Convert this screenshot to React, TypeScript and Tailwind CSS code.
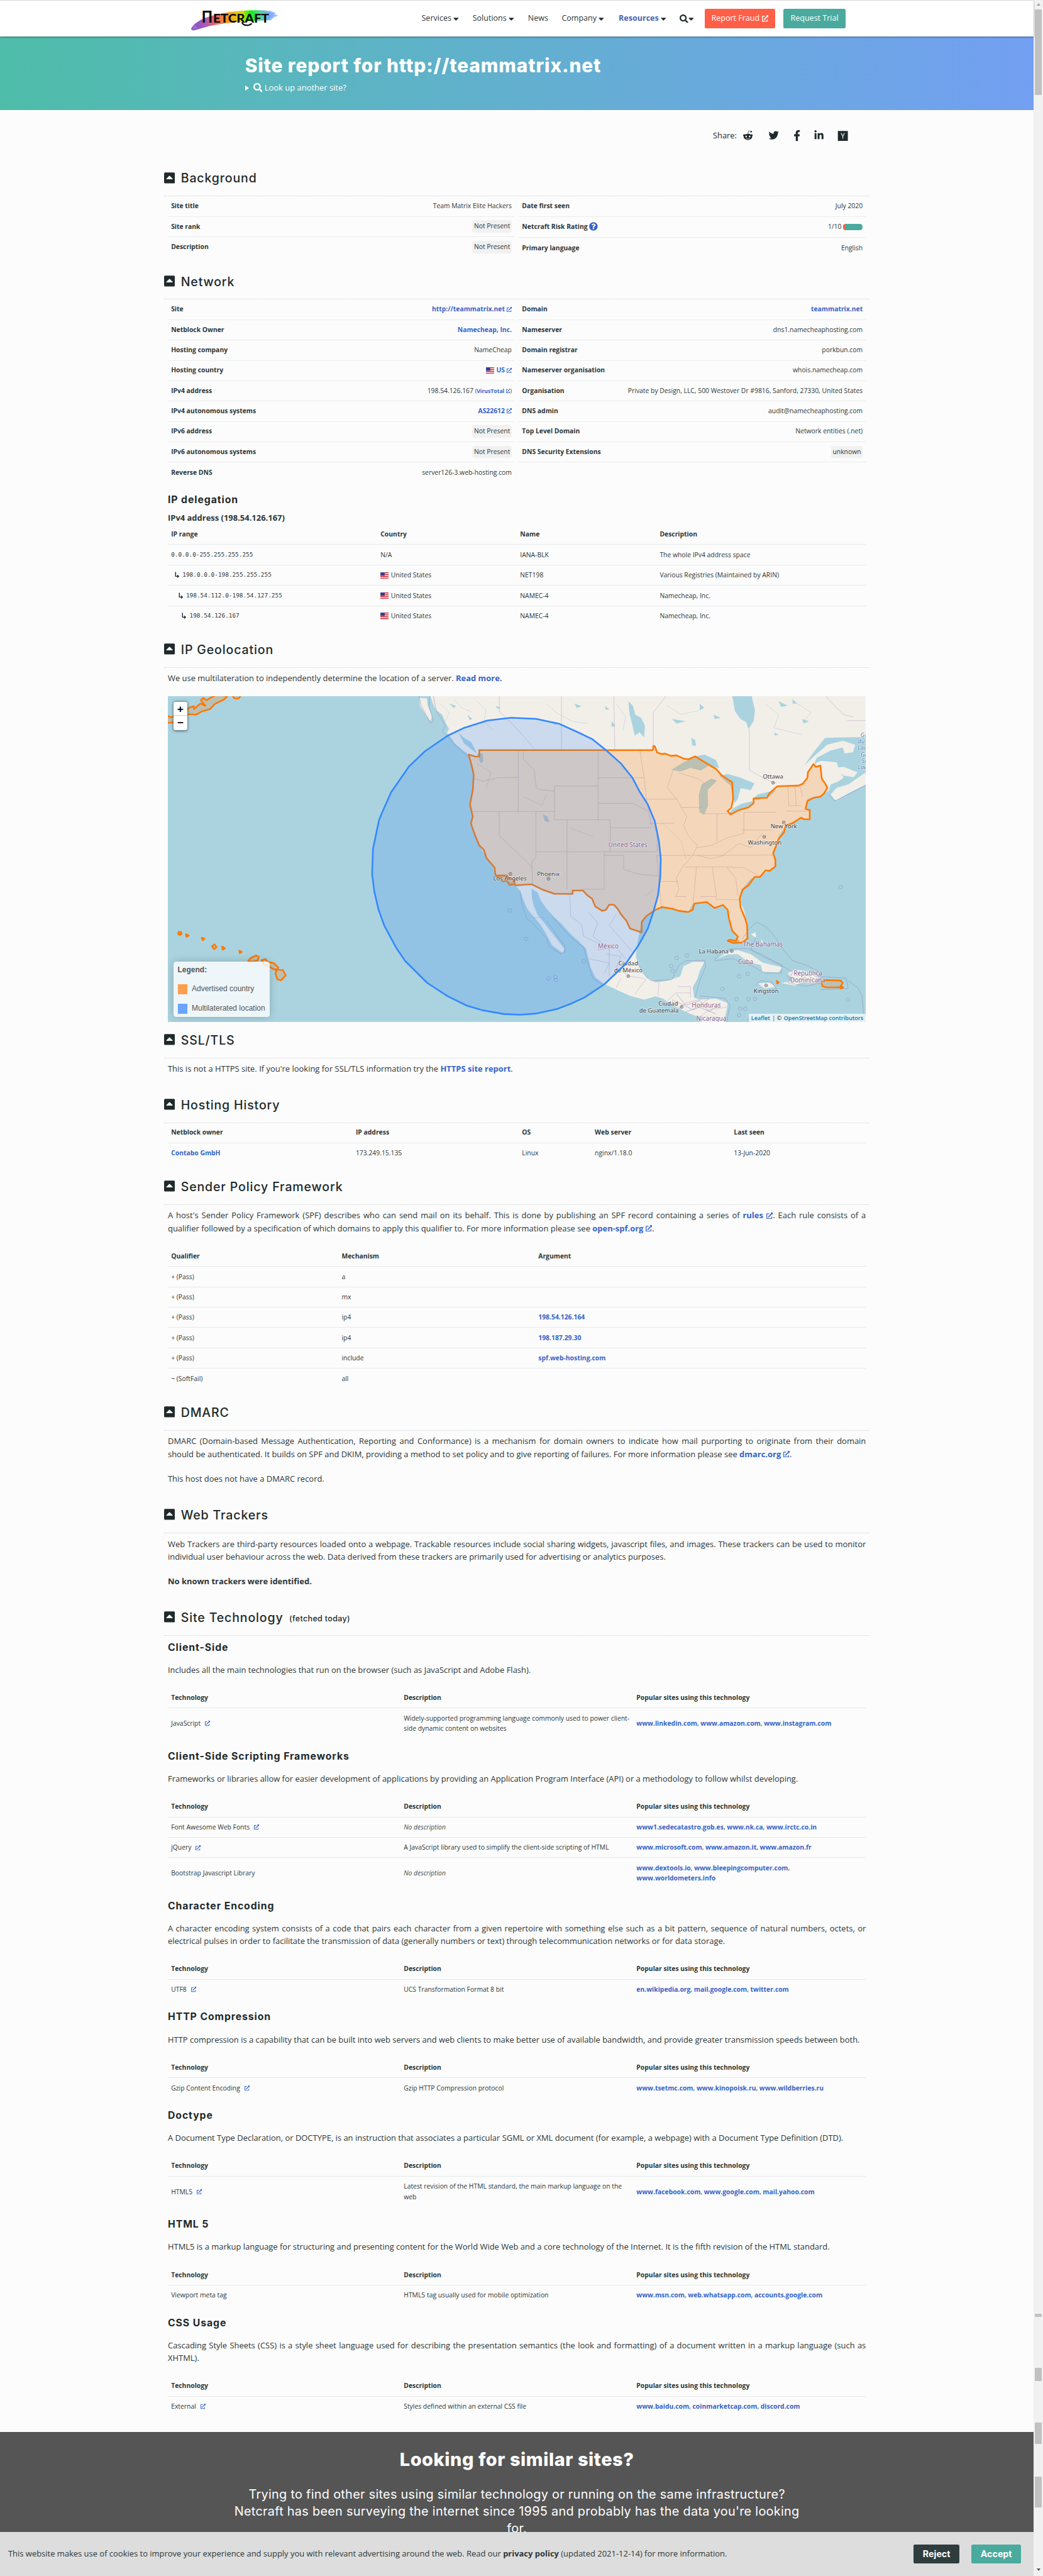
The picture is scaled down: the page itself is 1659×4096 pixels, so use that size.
import React from "react";
import {
  FaCaretDown,
  FaCaretSquareUp,
  FaExternalLinkAlt,
  FaFacebookF,
  FaHackerNews,
  FaLinkedinIn,
  FaQuestionCircle,
  FaRedditAlien,
  FaSearch,
  FaTwitter,
} from "react-icons/fa";

const Ext = () => <FaExternalLinkAlt className="inline h-[0.8em] w-[0.8em] align-[-0.05em] text-[#3a66cc]" />;

const Link = ({ children, ext }: { children: React.ReactNode; ext?: boolean }) => (
  <span className="font-bold text-[#3563c9]">
    {children}
    {ext && (
      <>
        {" "}
        <Ext />
      </>
    )}
  </span>
);

const Badge = ({ children }: { children: React.ReactNode }) => (
  <span className="inline-block h-[23px] rounded bg-[#f1f1f1] px-[3px] leading-[23px]">{children}</span>
);

const Flag = () => (
  <svg viewBox="0 0 15 12" className="mr-[4px] inline h-3 w-[15px] align-[-2px]">
    <rect width="15" height="12" fill="#fff" />
    {[0, 3.4, 6.8, 10.2].map((y) => (
      <rect key={y} y={y} width="15" height="1.8" fill="#d8202c" />
    ))}
    <rect width="8" height="6.4" fill="#3c3b8e" />
    <rect width="15" height="12" fill="none" stroke="#999" strokeOpacity=".4" />
  </svg>
);

const SectionTitle = ({ title, note }: { title: string; note?: string }) => (
  <div className="-mx-[7px] flex h-[45px] items-start border-b-2 border-dotted border-[#cfd0d0]">
    <FaCaretSquareUp className="-mt-[1px] h-[23px] w-5 text-[#20292b]" />
    <h2 className="ml-[11px] font-['Inter'] text-[22.6px] font-medium leading-[25px] tracking-[1px] text-[#20292b]">{title}</h2>
    {note && (
      <span className="ml-[11px] mt-[4px] font-['Inter'] text-[14.5px] font-medium leading-[20px] tracking-[0.4px] text-[#20292b]">{note}</span>
    )}
  </div>
);

const Section = ({ title, note, height, children }: { title: string; note?: string; height: string; children: React.ReactNode }) => (
  <section className={height}>
    <SectionTitle title={title} note={note} />
    {children}
  </section>
);

const Para = ({ children, className = "" }: { children: React.ReactNode; className?: string }) => (
  <p className={`text-justify text-[15px] leading-[23.2px] ${className}`}>{children}</p>
);

type Pair = [string, React.ReactNode];

const PairTable = ({ rows }: { rows: Pair[] }) => (
  <div className="flex-1">
    {rows.map(([k, v], i) => (
      <div
        key={k}
        className={`flex items-center justify-between border-[#ebecec] px-[6px] ${
          k === "Netcraft Risk Rating" ? "h-[38.8px]" : "h-[37.45px]"
        } ${i === rows.length - 1 && k !== "DNS Security Extensions" ? "" : "border-b"}`}
      >
        <span className="flex items-center font-bold">
          {k}
          {k === "Netcraft Risk Rating" && <FaQuestionCircle className="ml-[3px] mb-[3px] h-4 w-4 text-[#3563c9]" />}
        </span>
        <span>{v}</span>
      </div>
    ))}
  </div>
);

const GridTable = ({ cols, head, rows }: { cols: string; head: string[]; rows: React.ReactNode[][] }) => (
  <div>
    <div className={`grid h-[37.4px] items-center border-b border-[#e8e9e9] font-bold ${cols}`}>
      {head.map((h) => (
        <span key={h} className="px-[6px]">
          {h}
        </span>
      ))}
    </div>
    {rows.map((r, i) => (
      <div key={i} className={`grid items-center py-[8.6px] leading-[19.2px] ${cols} ${i < rows.length - 1 ? "border-b border-[#e8e9e9]" : ""}`}>
        {r.map((c, j) => (
          <span key={j} className="px-[6px]">
            {c}
          </span>
        ))}
      </div>
    ))}
  </div>
);

const notPresent = <Badge>Not Present</Badge>;

const background: [Pair[], Pair[]] = [
  [
    ["Site title", "Team Matrix Elite Hackers"],
    ["Site rank", notPresent],
    ["Description", notPresent],
  ],
  [
    ["Date first seen", "July 2020"],
    [
      "Netcraft Risk Rating",
      <span className="flex items-center gap-[3px]">
        1/10
        <span className="flex h-3 w-9 overflow-hidden rounded-[5px] bg-[#4aaa9d]">
          <span className="w-1 bg-[#ff5d47]" />
        </span>
      </span>,
    ],
    ["Primary language", "English"],
  ],
];

const network: [Pair[], Pair[]] = [
  [
    ["Site", <Link ext>http://teammatrix.net</Link>],
    ["Netblock Owner", <Link>Namecheap, Inc.</Link>],
    ["Hosting company", "NameCheap"],
    [
      "Hosting country",
      <>
        <Flag />
        <Link ext>US</Link>
      </>,
    ],
    [
      "IPv4 address",
      <>
        198.54.126.167{" "}
        <span className="text-[10px]">
          (<Link ext>VirusTotal</Link>)
        </span>
      </>,
    ],
    ["IPv4 autonomous systems", <Link ext>AS22612</Link>],
    ["IPv6 address", notPresent],
    ["IPv6 autonomous systems", notPresent],
    ["Reverse DNS", "server126-3.web-hosting.com"],
  ],
  [
    ["Domain", <Link>teammatrix.net</Link>],
    ["Nameserver", "dns1.namecheaphosting.com"],
    ["Domain registrar", "porkbun.com"],
    ["Nameserver organisation", "whois.namecheap.com"],
    ["Organisation", "Private by Design, LLC, 500 Westover Dr #9816, Sanford, 27330, United States"],
    ["DNS admin", "audit@namecheaphosting.com"],
    ["Top Level Domain", "Network entities (.net)"],
    ["DNS Security Extensions", <Badge>unknown</Badge>],
  ],
];

const Range = ({ depth, children }: { depth: number; children: string }) => (
  <span className="flex h-[19.2px] items-center font-['DejaVu_Sans_Mono',monospace] text-[10.9px]">
    {depth > 0 && (
      <svg viewBox="0 0 8 12" className={`mr-[6px] h-[12px] w-2 ${depth === 1 ? "ml-[7px]" : depth === 2 ? "ml-[13.5px]" : "ml-[20px]"}`}>
        <path d="M1.5 0.5V8.5H7M4.6 6L7.2 8.5L4.6 11" fill="none" stroke="#20292b" strokeWidth="1.6" />
      </svg>
    )}
    {children}
  </span>
);

const us = (
  <>
    <Flag />
    United States
  </>
);

const Sites = ({ names }: { names: string[] }) => (
  <>
    {names.map((n, i) => (
      <React.Fragment key={n}>
        <Link>{n}</Link>
        {i < names.length - 1 && ", "}
      </React.Fragment>
    ))}
  </>
);

type Tech = { title: string; text: string; rows: [string, boolean, string, string[]][] };

const technologies: Tech[] = [
  {
    title: "Client-Side",
    text: "Includes all the main technologies that run on the browser (such as JavaScript and Adobe Flash).",
    rows: [
      [
        "JavaScript",
        true,
        "Widely-supported programming language commonly used to power client-side dynamic content on websites",
        ["www.linkedin.com", "www.amazon.com", "www.instagram.com"],
      ],
    ],
  },
  {
    title: "Client-Side Scripting Frameworks",
    text: "Frameworks or libraries allow for easier development of applications by providing an Application Program Interface (API) or a methodology to follow whilst developing.",
    rows: [
      ["Font Awesome Web Fonts", true, "", ["www1.sedecatastro.gob.es", "www.nk.ca", "www.irctc.co.in"]],
      ["jQuery", true, "A JavaScript library used to simplify the client-side scripting of HTML", ["www.microsoft.com", "www.amazon.it", "www.amazon.fr"]],
      ["Bootstrap Javascript Library", false, "", ["www.dextools.io", "www.bleepingcomputer.com", "www.worldometers.info"]],
    ],
  },
  {
    title: "Character Encoding",
    text: "A character encoding system consists of a code that pairs each character from a given repertoire with something else such as a bit pattern, sequence of natural numbers, octets, or electrical pulses in order to facilitate the transmission of data (generally numbers or text) through telecommunication networks or for data storage.",
    rows: [["UTF8", true, "UCS Transformation Format 8 bit", ["en.wikipedia.org", "mail.google.com", "twitter.com"]]],
  },
  {
    title: "HTTP Compression",
    text: "HTTP compression is a capability that can be built into web servers and web clients to make better use of available bandwidth, and provide greater transmission speeds between both.",
    rows: [["Gzip Content Encoding", true, "Gzip HTTP Compression protocol", ["www.tsetmc.com", "www.kinopoisk.ru", "www.wildberries.ru"]]],
  },
  {
    title: "Doctype",
    text: "A Document Type Declaration, or DOCTYPE, is an instruction that associates a particular SGML or XML document (for example, a webpage) with a Document Type Definition (DTD).",
    rows: [
      ["HTML5", true, "Latest revision of the HTML standard, the main markup language on the web", ["www.facebook.com", "www.google.com", "mail.yahoo.com"]],
    ],
  },
  {
    title: "HTML 5",
    text: "HTML5 is a markup language for structuring and presenting content for the World Wide Web and a core technology of the Internet. It is the fifth revision of the HTML standard.",
    rows: [["Viewport meta tag", false, "HTML5 tag usually used for mobile optimization", ["www.msn.com", "web.whatsapp.com", "accounts.google.com"]]],
  },
  {
    title: "CSS Usage",
    text: "Cascading Style Sheets (CSS) is a style sheet language used for describing the presentation semantics (the look and formatting) of a document written in a markup language (such as XHTML).",
    rows: [["External", true, "Styles defined within an external CSS file", ["www.baidu.com", "coinmarketcap.com", "discord.com"]]],
  },
];

const H3 = ({ children, className = "" }: { children: string; className?: string }) => (
  <h3 className={`h-[26px] font-['Inter'] text-[18.3px] font-bold leading-[26px] tracking-[1.05px] text-[#20292b] ${className}`}>{children}</h3>
);

const US =
  "M682,290L698,300 705,298 705,270 1079,270 1080,252 1083,252 1088,280 1097,288 1105,286 1118,296 1130,294 1145,308 1155,312 1170,298 1195,330 1215,355 1228,385 1250,415 1252,490 1248,530 1240,545 1246,560 1265,540 1285,528 1296,510 1296,488 1325,485 1330,465 1347,433 1393,430 1402,422 1412,395 1413,370 1425,333 1430,345 1440,340 1443,400 1450,420 1455,440 1448,465 1440,480 1425,485 1412,500 1408,535 1417,540 1417,582 1405,582 1398,575 1380,600 1365,610 1362,640 1350,670 1345,700 1338,735 1343,765 1343,795 1330,815 1322,812 1310,842 1298,842 1285,880 1272,900 1266,940 1268,980 1278,1030 1282,1060 1283,1120 1270,1138 1252,1140 1240,1130 1245,1125 1258,1130 1262,1110 1250,1085 1243,1030 1240,990 1230,968 1212,982 1195,955 1168,962 1165,990 1155,1000 1135,995 1120,985 1098,978 1085,990 1065,1018 1055,1045 1055,1092 1030,1075 1022,1040 1010,1010 1003,985 995,967 985,967 978,990 970,995 955,975 948,940 938,925 928,903 906,903 906,918 867,918 840,898 818,875 783,880 775,850 760,838 740,835 738,800 720,755 715,720 705,700 697,660 690,620 687,600 691,570 685,515 691,450 693,380 688,335Z";

const CONTINENT =
  "M600,27L605,60 612,90 625,110 632,145 640,175 635,192 650,225 665,262 682,290 690,340 693,390 690,450 685,515 691,570 687,605 695,650 705,700 715,735 735,800 740,835 760,845 775,860 783,880 793,905 800,945 808,985 820,1015 838,1060 852,1110 862,1150 875,1170 885,1185 888,1165 875,1130 860,1090 845,1050 830,1010 822,970 818,930 818,895 830,912 838,950 850,985 865,1020 885,1060 900,1095 918,1130 935,1165 940,1210 945,1250 955,1295 975,1325 1000,1350 1030,1378 1060,1395 1085,1380 1100,1390 1115,1410 1135,1435 1160,1460 1180,1475 1185,1497 1232,1497 1238,1440 1240,1410 1215,1390 1180,1395 1168,1385 1165,1340 1175,1300 1180,1265 1190,1225 1165,1225 1145,1245 1138,1290 1110,1310 1085,1318 1065,1295 1050,1250 1042,1200 1045,1150 1050,1095 1055,1040 1075,1005 1090,980 1110,978 1130,990 1155,1000 1165,965 1195,955 1212,980 1230,968 1240,1000 1245,1060 1258,1100 1268,1140 1280,1130 1282,1050 1275,990 1265,940 1270,900 1290,850 1310,840 1330,810 1343,790 1338,730 1350,660 1365,610 1395,580 1417,580 1415,540 1408,530 1412,490 1440,475 1458,452 1462,425 1478,412 1490,395 1480,360 1475,325 1440,318 1426,333 1432,305 1462,272 1488,258 1492,285 1510,280 1515,245 1488,228 1455,245 1425,300 1405,340 1425,280 1450,215 1500,212 1538,212 1538,27Z";

const CIRCLE =
  "M773,124L827,129 878,152 918,190 948,220 978,270 1010,330 1035,395 1050,455 1068,515 1083,590 1092,680 1096,760 1095,840 1090,925 1080,1000 1068,1075 1048,1150 1020,1235 975,1325 932,1385 903,1413 873,1437 827,1458 793,1463 758,1460 712,1443 678,1422 637,1380 593,1320 545,1220 527,1165 500,1060 488,990 479,910 474,830 476,715 489,585 497,545 515,460 553,345 588,275 637,205 672,170 722,137Z";

const LAKES = [
  "M1250,27L1256,95 1268,130 1280,145 1285,175 1296,140 1299,90 1292,27Z",
  "M1026,50L1036,70 1041,110 1054,125 1062,160 1060,212 1050,190 1040,205 1034,150 1029,110Z",
  "M1118,360L1145,325 1172,298 1190,290 1215,315 1222,352 1200,340 1182,362 1160,350 1140,366Z",
  "M1178,470L1184,425 1205,398 1217,408 1197,450 1198,520 1190,560 1179,550Z",
  "M1222,385L1240,378 1265,392 1298,420 1290,450 1268,442 1262,490 1255,510 1246,430Z",
  "M1243,558L1250,535 1270,512 1294,500 1296,515 1268,540Z",
  "M1294,490L1305,470 1335,455 1345,450 1330,480 1300,495Z",
  "M1162,215L1170,225 1172,250 1164,250Z",
  "M842,560L852,570 856,595 846,590Z",
  "M660,190L672,215 688,235 700,285 690,270 672,240Z",
  "M700,285L712,285 714,320 708,330Z",
];

const STATES =
  "M692,395L712,411 745,395 790,393M789,270V547M800,270V310L823,360 828,440 840,450 867,455M867,432H961M867,432V584H987V728M691,547H867M748,547V655L820,800M827,547V728H1087M894,584V897M961,270V584M961,395H1035L1060,395M1051,270L1060,395 1065,491 1075,600 1088,640V728M961,510H1035L1068,545M987,620H1077M827,728V755L818,775 820,875M974,728V897H928M974,745H1016V808L1050,830 1094,838M1087,745L1098,990M1063,491H1131M1072,600H1125M1087,745H1157M1131,491L1140,528 1152,570 1145,610 1155,655 1175,700 1165,745 1143,797 1130,845 1135,900 1128,930H1152M1140,528H1185M1185,557H1245M1217,557V680M1175,710L1205,700 1240,665 1275,645V550H1345M1155,745L1337,743M1147,797H1240L1275,800 1310,840M1173,797L1166,955M1207,797L1216,930M1180,930H1215V943L1263,945M1238,797L1258,850 1262,930M1273,630H1337M1175,745L1205,760 1230,745 1265,690 1290,710 1315,645M1370,433L1372,520H1398M1385,433L1388,520M1366,545H1412M1395,425L1402,480M1122,365L1110,440 1131,491M1134,372L1175,398 1190,420M1098,862H1133";

const PROVINCES =
  "M748,27V95L778,155 810,230 825,268M882,27V268M995,27L997,268M1107,27L1080,100V252M1287,175V360L1320,400 1345,420M1452,27L1470,70 1490,110 1510,120M1498,137H1538M940,1000L960,1050 950,1110 975,1150M900,918L902,1020 925,1055M1000,1010L985,1060 1010,1120 1035,1180M925,1055L930,1110 960,1140M820,1025H845M980,1190L1010,1200 1000,1250 1030,1290 1060,1300M940,1210L985,1230 975,1275M1000,1340L1010,1300M1092,1320L1090,1375M1132,1336H1160V1386M1110,1400L1128,1365H1160M1120,1400L1140,1440M1180,1395L1150,1410 1135,1435M1237,1430L1200,1440 1180,1475M960,1170L1000,1160 1020,1210M985,1150V1290M1065,1300L1040,1370";

const MARITIME =
  "M575,27L580,70 590,110 600,148 606,140 602,110 597,70 598,27M606,27L612,90 632,160 625,185 640,215 660,262 680,297M793,905L797,970 805,1010 806,1028 820,1050 850,1120 855,1155 880,1188 890,1180 888,1150 870,1100 850,1040M862,1020L900,1110 930,1160 940,1240 950,1300 972,1330M1272,1120L1285,1080 1302,1045 1325,1070 1345,1120 1360,1170 1380,1220 1410,1240 1438,1270 1435,1310M1302,1110L1290,1170 1318,1195 1345,1230 1380,1270 1370,1320 1410,1335 1440,1320M1538,428L1500,470 1470,500 1458,470M1212,1215L1225,1180 1250,1165 1285,1165 1320,1205 1358,1240 1355,1275 1320,1275 1290,1240 1250,1210 1212,1220M1300,1330L1310,1310 1335,1315 1345,1345 1320,1370 1302,1345M1045,1220L1055,1270 1075,1310 1120,1305 1135,1240 1150,1220 1190,1218 1193,1245 1180,1310 1170,1385M1180,1378L1235,1390 1245,1420 1238,1497M1500,1310L1520,1340 1530,1380 1532,1440 1536,1490M1428,1290L1495,1298 1500,1345 1440,1350";

const dots: [number, number][] = [
  [771, 993], [806, 1121], [854, 1300], [869, 1292], [870, 1306], [930, 1222], [1130, 1207], [1152, 1196], [1118, 1243],
  [1121, 1265], [1265, 1290], [1283, 1279], [1229, 1347], [1259, 1392], [1285, 1392], [1299, 1392], [1267, 1436], [1278, 1436],
  [1265, 1465], [1499, 1396], [1484, 887], [1288, 1488], [1370, 1490],
];

type Label = [string, number, number, "city" | "country" | "sea"];
const labels: Label[] = [
  ["Ottawa", 1338, 399, "city"],
  ["New York", 1361, 623, "city"],
  ["Washington", 1320, 696, "city"],
  ["United States", 1025, 707, "country"],
  ["Phoenix", 854, 839, "city"],
  ["Los Angeles", 771, 859, "city"],
  ["México", 983, 1165, "country"],
  ["Ciudad", 1026, 1240, "city"],
  ["de México", 1026, 1273, "city"],
  ["La Habana", 1210, 1187, "city"],
  ["The Bahamas", 1316, 1156, "country"],
  ["Cuba", 1279, 1234, "country"],
  ["República", 1413, 1285, "country"],
  ["Dominicana", 1413, 1318, "country"],
  ["Kingston", 1323, 1366, "city"],
  ["Ciudad", 1112, 1421, "city"],
  ["de Guatemala", 1092, 1454, "city"],
  ["Honduras", 1194, 1431, "country"],
  ["Nicaragua", 1205, 1489, "country"],
  ["Golfe", 1541, 211, "sea"],
  ["du Saint-", 1546, 240, "sea"],
  ["Laurent", 1542, 269, "sea"],
  ["Gulf of", 1546, 298, "sea"],
  ["Saint", 1543, 328, "sea"],
  ["Lawrence", 1547, 357, "sea"],
];

const markers: [number, number][] = [
  [1338, 417], [1361, 596], [1319, 661], [772, 828], [854, 850], [1026, 1289], [1249, 1176], [1323, 1331], [1141, 1428],
];

const GeoMap = () => (
  <div className="relative mt-[22px] h-[600px] w-[1285px] overflow-hidden bg-[#aad3df] font-['Liberation_Sans',sans-serif]">
    <svg viewBox="34 27 1504 1470" preserveAspectRatio="none" className="absolute inset-0 h-full w-full">
      <g fill="#f2efe9">
        <path d={CONTINENT} />
        <path d="M576,35L592,37 594,70 603,115 600,140 588,105 577,70Z" />
        <path d="M636,188L652,205 672,240 690,275 694,292 672,275 652,240Z" />
        <path d="M1462,470L1475,440 1500,425 1538,370 1538,425 1500,465 1473,498Z" />
        <path d="M1470,350L1490,345 1520,370 1512,392 1490,385Z" />
        <path d="M1218,1210L1240,1180 1262,1172 1290,1190 1315,1228 1358,1250 1350,1272 1315,1270 1312,1240 1285,1225 1262,1190 1240,1192Z" />
        <path d="M1370,1275L1385,1260 1420,1270 1440,1295 1430,1320 1400,1318 1385,1332 1355,1320 1380,1310Z" />
        <path d="M1305,1322L1330,1318 1343,1338 1320,1345Z" />
        <path d="M1290,1100L1300,1092 1303,1120ZM1312,1120L1320,1150 1314,1150Z" />
      </g>
      <g fill="#aad3df">
        {LAKES.map((d) => (
          <path key={d} d={d} />
        ))}
        <path d="M640,60L655,70 650,80ZM680,110L690,130 684,135ZM860,140L880,150 868,155ZM910,60L925,72 915,80ZM990,140L998,160 990,165ZM1120,130L1150,140 1130,150ZM1180,60L1190,80 1180,90ZM1210,110L1225,125 1212,130ZM1350,50L1370,70 1355,75ZM1400,130L1415,140 1405,150ZM1380,40L1390,60 1380,60ZM740,70L752,80 744,84ZM1340,190L1350,200 1342,205ZM975,70L985,85 978,90Z" />
      </g>
      <g fill="none" stroke="#9db9cf" strokeOpacity=".45">
        <path
          vectorEffect="non-scaling-stroke"
          d="M620,60L640,100 632,140M650,40L668,80 690,100M700,50L720,90 715,140 735,180M850,60L870,100 905,140 940,150M1000,60L1020,120 1015,180M1110,70L1140,110 1180,90M1320,60L1350,110 1340,170 1400,200M1390,60L1420,100 1400,150M700,330L730,370 720,440M800,480L840,520 850,470M900,620L950,660M1100,600L1140,680 1150,760M1060,930L1080,900"
        />
      </g>
      <g fill="none" stroke="#9b7db0" strokeOpacity=".4">
        <path vectorEffect="non-scaling-stroke" d={STATES} />
        <path vectorEffect="non-scaling-stroke" d={PROVINCES} />
      </g>
      <g fill="none" stroke="#8f86b8" strokeOpacity=".6">
        <path vectorEffect="non-scaling-stroke" d={MARITIME} />
        {dots.map(([x, y]) => (
          <ellipse key={`${x}-${y}`} cx={x} cy={y} rx="4" ry="8" vectorEffect="non-scaling-stroke" />
        ))}
        <path
          vectorEffect="non-scaling-stroke"
          d="M1130,1370L1150,1420 1180,1400 1200,1450 1225,1410M1120,1395L1165,1440 1200,1390M1150,1450L1180,1430 1215,1460M1370,1290L1395,1320 1410,1280 1430,1310"
        />
      </g>
      <g fill="#ff7800" fillOpacity=".2" stroke="#ff7800" strokeWidth="3" strokeLinejoin="round">
        <path vectorEffect="non-scaling-stroke" d={US} />
        <path vectorEffect="non-scaling-stroke" d="M740,835L765,835 768,850 782,855 780,875 770,878 765,860 755,862 748,845Z" />
        <path
          vectorEffect="non-scaling-stroke"
          d="M162,27L155,42 135,62 125,85 108,95 95,110 72,108 78,80 90,72 90,85 104,60 115,70 105,45 110,35 117,45 125,35 140,20Z"
        />
        <path vectorEffect="non-scaling-stroke" d="M30,112L40,122 50,118 60,125 55,145 30,147" />
        <path vectorEffect="non-scaling-stroke" d="M174,27C176,42 188,42 190,27" />
        <path
          vectorEffect="non-scaling-stroke"
          d="M57,1090L62,1090 64,1098 60,1104 56,1100ZM73,1100L79,1106 74,1112ZM107,1116L113,1120 109,1127ZM129,1155L134,1146 139,1158 134,1168ZM151,1156L157,1164 152,1170ZM188,1174L193,1180 189,1186Z"
        />
        <path
          vectorEffect="non-scaling-stroke"
          d="M207,1222L212,1208 224,1196 230,1202 227,1220 215,1224ZM236,1218L244,1212 250,1226 262,1230 272,1250 270,1262 262,1258 252,1246 240,1236ZM268,1258L282,1262 288,1286 278,1308 270,1304 266,1280Z"
        />
        <path
          vectorEffect="non-scaling-stroke"
          d="M1442,1318L1450,1307 1484,1309 1488,1320 1482,1340 1452,1340 1444,1334ZM1484,1333L1489,1340 1484,1345ZM1346,1311L1350,1318 1347,1323Z"
        />
      </g>
      <path d={CIRCLE} fill="#3388ff" fillOpacity=".2" stroke="none" />
    </svg>
    <svg viewBox="0 0 1285 600" className="absolute inset-0 h-full w-full font-['Noto_Sans',sans-serif]">
      {markers.map(([x, y]) => (
        <g key={x} fill="none" stroke="#555">
          <circle cx={(x - 34) * 0.8544} cy={(y - 27) * 0.4082} r="2.6" fill="#fff" fillOpacity=".5" />
          <circle cx={(x - 34) * 0.8544} cy={(y - 27) * 0.4082} r=".7" />
        </g>
      ))}
      {labels.map(([t, x, y, kind]) => (
        <text
          key={t + y}
          x={(x - 34) * 0.8544}
          y={(y - 27) * 0.4082}
          textAnchor="middle"
          fontSize={kind === "country" ? 11.5 : 11}
          fontStyle={kind === "sea" ? "italic" : "normal"}
          fill={kind === "country" ? "#85628f" : kind === "sea" ? "#5d88b8" : "#3c3a3c"}
          stroke="#fff"
          strokeOpacity=".5"
          strokeWidth="2"
          paintOrder="stroke"
        >
          {t}
        </text>
      ))}
    </svg>
    <svg viewBox="34 27 1504 1470" preserveAspectRatio="none" className="absolute inset-0 h-full w-full">
      <path vectorEffect="non-scaling-stroke" d={CIRCLE} fill="none" stroke="#3388ff" strokeWidth="3" strokeLinejoin="round" />
    </svg>
    <div className="absolute left-[10px] top-[10px] w-[26px] rounded bg-white text-center text-[20px] font-bold leading-[26px] text-black shadow-[0_1px_5px_rgba(0,0,0,0.65)]">
      <div className="h-[26px] border-b border-[#ccc]">+</div>
      <div className="h-[26px]">−</div>
    </div>
    <div className="absolute bottom-[10px] left-[10px] flex h-[102px] w-[178px] flex-col justify-between rounded-[5px] bg-white/80 px-2 pb-[5px] pt-[6px] text-[13.9px] leading-[20px] text-[#555] shadow-[0_0_15px_rgba(0,0,0,0.2)]">
      <div className="font-bold">Legend:</div>
      <div className="flex items-center gap-2">
        <span className="h-[18px] w-[18px] bg-[#fb9f4e]" />
        Advertised country
      </div>
      <div className="flex items-center gap-2">
        <span className="h-[18px] w-[18px] bg-[#6aa5fb]" />
        Multilaterated location
      </div>
    </div>
    <div className="absolute bottom-0 right-0 flex h-4 w-[216px] items-center justify-center gap-1 whitespace-nowrap bg-white/70 font-['Open_Sans'] text-[10.5px] leading-4 text-[#333]">
      <span className="font-semibold text-[#0078a8]">Leaflet</span>
      <span>| ©</span>
      <span className="font-semibold text-[#0078a8]">OpenStreetMap contributors</span>
    </div>
  </div>
);

const Logo = () => (
  <svg viewBox="0 0 170 44" className="h-11 w-[170px]">
    <defs>
      <linearGradient id="brush" x1="0" x2="1">
        <stop offset="0" stopColor="#8a4fc4" />
        <stop offset=".15" stopColor="#a05cc0" />
        <stop offset=".3" stopColor="#f2655a" />
        <stop offset=".45" stopColor="#f0a818" />
        <stop offset=".58" stopColor="#d8dc10" />
        <stop offset=".68" stopColor="#10f010" />
        <stop offset=".78" stopColor="#50d890" />
        <stop offset=".9" stopColor="#78a8ff" />
        <stop offset="1" stopColor="#a8c8ff" />
      </linearGradient>
    </defs>
    <path d="M4 40C2 35 10 27 26 19C60 6 110 1 150 5L160 9L156 11L164 13L156 17L150 22C110 24 60 26 30 35L8 41Z" fill="url(#brush)" />
    <path d="M6 38L14 35M4 34L12 32M140 4L156 8M148 20L158 16" stroke="#fff" strokeWidth=".8" strokeOpacity=".7" />
    <text x="23" y="27" fontFamily="Lato" fontWeight="900" fontSize="30" textLength="20" lengthAdjust="spacingAndGlyphs" fill="#0a0a0a">
      Π
    </text>
    <text x="44" y="27" fontFamily="Lato" fontWeight="900" fontSize="22" textLength="103" lengthAdjust="spacingAndGlyphs" fill="#0a0a0a">
      ETCRAFT
    </text>
    <path d="M97 26C100 33 110 33 115 28" fill="none" stroke="#0a0a0a" strokeWidth="2.6" />
  </svg>
);

const NavItem = ({ children, width, active }: { children: string; width: string; active?: boolean }) => (
  <div className={`flex items-center gap-1 ${width} ${active ? "font-bold text-[#4763ad]" : ""}`}>
    {children}
    {children !== "News" && <FaCaretDown className="h-4 w-[10px] text-[#20292b]" />}
  </div>
);

export default function App() {
  return (
    <div className="relative h-[4741px] w-[1920px] overflow-hidden bg-[#fcfcfc] font-['Open_Sans',sans-serif] text-[12px] text-[#2c3637] [zoom:0.86406]">
      <div className="flex h-full">
        <div className="flex w-[1903px] flex-col">
          <header className="relative flex h-[67px] items-center border-t border-[#d8d8d8] bg-white pl-[348px] text-[14.5px] shadow-[0_1px_3px_rgba(0,0,0,0.4)]">
            <div className="mt-[6px] h-11">
              <Logo />
            </div>
            <nav className="ml-[258px] flex items-center">
              <NavItem width="w-[94px]">Services</NavItem>
              <NavItem width="w-[102px]">Solutions</NavItem>
              <NavItem width="w-[62px]">News</NavItem>
              <NavItem width="w-[105px]">Company</NavItem>
              <NavItem width="w-[112px]" active>
                Resources
              </NavItem>
              <div className="flex w-[46px] items-center text-[#20292b]">
                <FaSearch className="h-4 w-4" />
                <FaCaretDown className="h-4 w-[10px]" />
              </div>
              <div className="flex h-9 w-[130px] items-center justify-center gap-1 rounded-[3px] bg-[#ff5f47] text-white">
                Report Fraud <FaExternalLinkAlt className="h-3 w-3" />
              </div>
              <div className="ml-[15px] flex h-9 w-[115px] items-center justify-center rounded-[3px] bg-[#4aaa9d] text-white">Request Trial</div>
            </nav>
          </header>

          <div className="h-[136px] bg-linear-to-r from-[#4ebda9] to-[#739ff2] pl-[451px] pt-[34px] text-white">
            <h1 className="whitespace-nowrap font-['Inter'] text-[34.5px] font-extrabold leading-[40px] tracking-[1.05px]">
              Site report for http://teammatrix.net
            </h1>
            <div className="mt-[9px] flex items-center text-[15px] leading-[23px]">
              <span className="h-0 w-0 border-y-[5px] border-l-[8px] border-y-transparent border-l-white" />
              <FaSearch className="ml-2 mr-1 h-[17px] w-[17px]" />
              Look up another site?
            </div>
          </div>

          <main className="ml-[309px] w-[1285px]">
            <div className="flex h-[113.5px] items-start justify-end pr-[32px] pt-[37px] text-[14.8px] leading-[20px] text-[#20292b]">
              Share:
              <FaRedditAlien className="ml-[11px] h-[19px] w-[20px]" />
              <FaTwitter className="ml-[27px] h-[19px] w-[20px]" />
              <FaFacebookF className="ml-[23px] h-[20px] w-[20px]" />
              <FaLinkedinIn className="ml-[21px] h-[19px] w-[20px]" />
              <FaHackerNews className="ml-[24px] h-[21px] w-[20px]" />
            </div>

            <Section title="Background" height="h-[190px]">
              <div className="flex gap-[7px]">
                <PairTable rows={background[0]} />
                <PairTable rows={background[1]} />
              </div>
            </Section>

            <Section title="Network" height="h-[677.5px]">
              <div className="flex gap-[7px]">
                <PairTable rows={network[0]} />
                <PairTable rows={network[1]} />
              </div>
              <H3 className="mt-[19px]">IP delegation</H3>
              <h4 className="mt-2 h-6 text-[15px] font-bold leading-6">IPv4 address (198.54.126.167)</h4>
              <GridTable
                cols="grid-cols-[30%_20%_20%_30%]"
                head={["IP range", "Country", "Name", "Description"]}
                rows={[
                  [<Range depth={0}>0.0.0.0-255.255.255.255</Range>, "N/A", "IANA-BLK", "The whole IPv4 address space"],
                  [<Range depth={1}>198.0.0.0-198.255.255.255</Range>, us, "NET198", "Various Registries (Maintained by ARIN)"],
                  [<Range depth={2}>198.54.112.0-198.54.127.255</Range>, us, "NAMEC-4", "Namecheap, Inc."],
                  [<Range depth={3}>198.54.126.167</Range>, us, "NAMEC-4", "Namecheap, Inc."],
                ]}
              />
            </Section>

            <Section title="IP Geolocation" height="h-[719px]">
              <Para className="mt-[7px]">
                We use multilateration to independently determine the location of a server. <Link>Read more.</Link>
              </Para>
              <GeoMap />
            </Section>

            <Section title="SSL/TLS" height="h-[118.5px]">
              <Para className="mt-[7px]">
                This is not a HTTPS site. If you're looking for SSL/TLS information try the <Link>HTTPS site report</Link>.
              </Para>
            </Section>

            <Section title="Hosting History" height="h-[151px]">
              <GridTable
                cols="grid-cols-[340px_306px_134px_256px_1fr]"
                head={["Netblock owner", "IP address", "OS", "Web server", "Last seen"]}
                rows={[[<Link>Contabo GmbH</Link>, "173.249.15.135", "Linux", "nginx/1.18.0", "13-Jun-2020"]]}
              />
            </Section>

            <Section title="Sender Policy Framework" height="h-[415px]">
              <Para className="mb-[22.3px] mt-[7.5px]">
                A host's Sender Policy Framework (SPF) describes who can send mail on its behalf. This is done by publishing an SPF record containing a series of{" "}
                <Link ext>rules</Link>. Each rule consists of a qualifier followed by a specification of which domains to apply this qualifier to. For more
                information please see <Link ext>open-spf.org</Link>.
              </Para>
              <GridTable
                cols="grid-cols-[314px_362px_1fr]"
                head={["Qualifier", "Mechanism", "Argument"]}
                rows={[
                  ["+ (Pass)", "a", ""],
                  ["+ (Pass)", "mx", ""],
                  ["+ (Pass)", "ip4", <Link>198.54.126.164</Link>],
                  ["+ (Pass)", "ip4", <Link>198.187.29.30</Link>],
                  ["+ (Pass)", "include", <Link>spf.web-hosting.com</Link>],
                  ["~ (SoftFail)", "all", ""],
                ]}
              />
            </Section>

            <Section title="DMARC" height="h-[189px]">
              <Para className="mt-[8px]">
                DMARC (Domain-based Message Authentication, Reporting and Conformance) is a mechanism for domain owners to indicate how mail purporting to
                originate from their domain should{"\u00a0"}be authenticated. It builds on SPF and DKIM, providing a method to set policy and to give
                reporting of failures. For more information please see <Link ext>dmarc.org</Link>.
              </Para>
              <Para className="mt-[22.5px]">This host does not have a DMARC record.</Para>
            </Section>

            <Section title="Web Trackers" height="h-[188.5px]">
              <Para className="mt-[8px]">
                Web Trackers are third-party resources loaded onto a webpage. Trackable resources include social sharing widgets, javascript files, and
                images. These trackers can be used to monitor individual user behaviour across the web. Data derived from these trackers are primarily used
                for advertising or analytics purposes.
              </Para>
              <Para className="mt-[22.5px] font-bold">No known trackers were identified.</Para>
            </Section>

            <Section title="Site Technology" note="(fetched today)" height="h-[1510px]">
              {technologies.map((t, i) => (
                <div key={t.title}>
                  <H3 className={i === 0 ? "mt-[9px]" : "mt-[20px]"}>{t.title}</H3>
                  <Para className="mb-[22.3px] mt-4">{t.text}</Para>
                  <GridTable
                    cols="grid-cols-3"
                    head={["Technology", "Description", "Popular sites using this technology"]}
                    rows={t.rows.map(([name, ext, desc, sites]) => [
                      <>
                        {name}
                        {ext && (
                          <span className="ml-2">
                            <Ext />
                          </span>
                        )}
                      </>,
                      desc || <em className="opacity-90">No description</em>,
                      <Sites names={sites} />,
                    ])}
                  />
                </div>
              ))}
            </Section>
          </main>

          <footer className="h-[184px] shrink-0 overflow-hidden bg-[#555] pt-[30px] text-center font-['Inter'] text-white">
            <h2 className="text-[33.5px] font-extrabold leading-[44px] tracking-[0.65px]">Looking for similar sites?</h2>
            <p className="mx-auto mt-[26px] w-[1100px] text-[23px] leading-[31px] tracking-[0.33px]">
              Trying to find other sites using similar technology or running on the same infrastructure?
              <br />
              Netcraft has been surveying the internet since 1995 and probably has the data you're looking
              <br />
              for.
            </p>
          </footer>

          <div className="flex h-[82px] shrink-0 items-center bg-[#ddd] pl-[15px] pr-[23px] text-[15px]">
            <p className="flex-1">
              This website makes use of cookies to improve your experience and supply you with relevant advertising around the web. Read our <b>privacy policy</b>{" "}
              (updated 2021-12-14) for more information.
            </p>
            <span className="flex h-[34px] w-[84px] items-center justify-center rounded-[3px] bg-[#2f3d3e] font-['Inter'] text-[16.5px] font-bold text-white">Reject</span>
            <span className="ml-[22px] flex h-[34px] w-[92px] items-center justify-center rounded-[3px] bg-[#4aaa9d] font-['Inter'] text-[16.5px] font-bold text-white">
              Accept
            </span>
          </div>
        </div>

        <aside className="flex w-[17px] flex-col items-center bg-[#f1f1f1]">
          <span className="mt-[6px] h-0 w-0 border-x-4 border-b-[5px] border-x-transparent border-b-[#a0a0a0]" />
          <span className="mt-[7px] h-[157px] w-[13px] bg-[#c1c1c1]" />
          <span className="mt-[4083px] h-[6px] w-[13px] bg-[#c1c1c1]" />
          <span className="mt-[94px] h-[24px] w-[13px] bg-[#c1c1c1]" />
          <span className="mt-[76px] h-[40px] w-[13px] bg-[#c1c1c1]" />
          <span className="mt-[60px] h-[57px] w-[13px] bg-[#c1c1c1]" />
          <span className="mt-[112px] h-0 w-0 border-x-4 border-t-[5px] border-x-transparent border-t-[#505050]" />
        </aside>
      </div>
    </div>
  );
}
